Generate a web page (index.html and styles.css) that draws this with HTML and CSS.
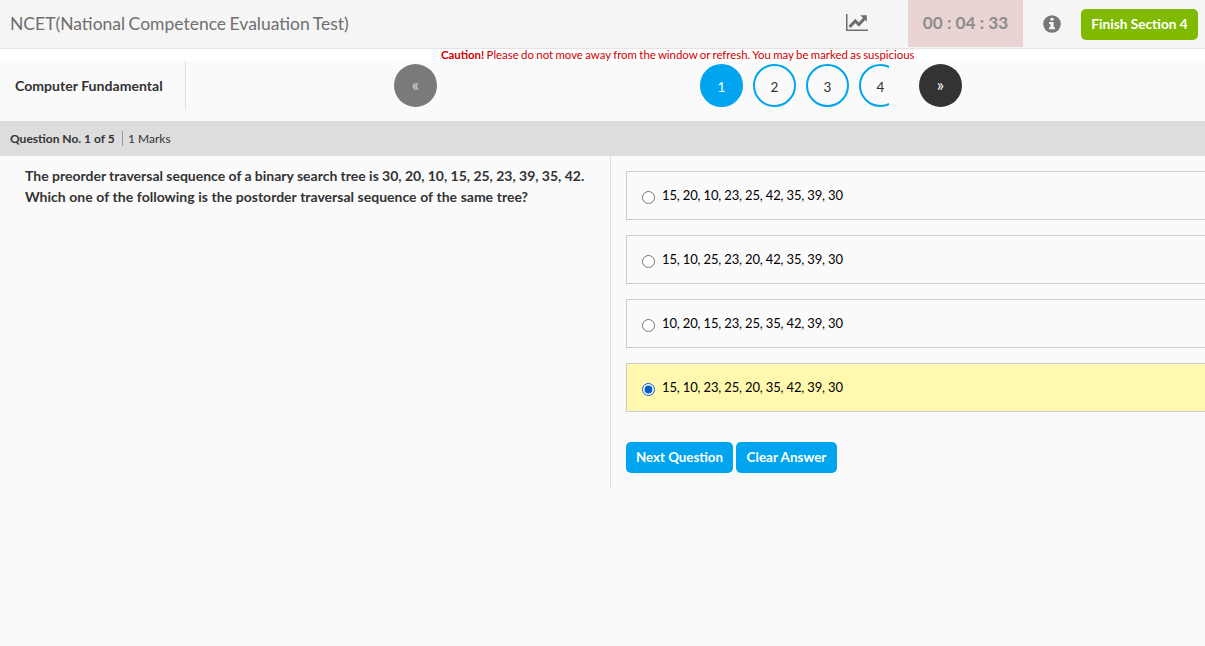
FILE: index.html
```html
<!DOCTYPE html>
<html lang="en">
<head>
<meta charset="utf-8">
<title>NCET(National Competence Evaluation Test)</title>
<link rel="stylesheet" href="styles.css">
</head>
<body>
<header class="topbar">
  <h1 class="title">NCET(National Competence Evaluation Test)</h1>
  <svg class="chart-icon" viewBox="0 0 22 17"><path d="M.75 0v16.25H22" fill="none" stroke="#6f6f6f" stroke-width="1.5"/><path d="M3.5 13l5.8-6 3.5 3.5 5.7-6" fill="none" stroke="#6f6f6f" stroke-width="3"/><path d="M14.2 1.2h6.6v6.6z" fill="#6f6f6f"/></svg>
  <div class="timer">00 : 04 : 33</div>
  <svg class="info-icon" viewBox="0 0 18 18"><circle cx="9" cy="9" r="8.8" fill="#777"/><path d="M7.4 3h3.2v2.6H7.4zM6 7h4.6v5.3H12v1.9H6v-1.9h1.4V8.9H6z" fill="#f5f5f5"/></svg>
  <button class="btn finish">Finish Section 4</button>
</header>
<p class="caution"><b>Caution!</b> Please do not move away from the window or refresh. You may be marked as suspicious</p>
<nav class="sections">
  <div class="section-name">Computer Fundamental</div>
  <button class="round prev">«</button>
  <div class="pages">
    <button class="round page current">1</button>
    <button class="round page">2</button>
    <button class="round page">3</button>
    <button class="round page">4</button>
  </div>
  <button class="round next">»</button>
</nav>
<div class="meta"><b>Question No. 1 of 5</b><span class="marks">1 Marks</span></div>
<main class="content">
  <section class="question"><span class="line-a">The preorder traversal sequence of a binary search tree is 30, 20, 10, 15, 25, 23, 39, 35, 42.</span><br><span class="line-b">Which one of the following is the postorder traversal sequence of the same tree?</span></section>
  <section class="answers">
    <label class="option"><input type="radio" name="answer"><span>15, 20, 10, 23, 25, 42, 35, 39, 30</span></label>
    <label class="option"><input type="radio" name="answer"><span>15, 10, 25, 23, 20, 42, 35, 39, 30</span></label>
    <label class="option"><input type="radio" name="answer"><span>10, 20, 15, 23, 25, 35, 42, 39, 30</span></label>
    <label class="option selected"><input type="radio" name="answer" checked><span>15, 10, 23, 25, 20, 35, 42, 39, 30</span></label>
    <div class="actions"><button class="btn blue">Next Question</button><button class="btn blue clear">Clear Answer</button></div>
  </section>
</main>
</body>
</html>
```
FILE: styles.css
```css
* { box-sizing: border-box; }
body { margin: 0; height: 646px; overflow: hidden; background: #fafafa; color: #333; font: 14px/21px Lato, "Liberation Sans", sans-serif; }
button { font: inherit; border: 0; padding: 0; }
.topbar { display: flex; height: 49px; background: #f5f5f5; border-bottom: 1px solid #e3e3e3; }
.title { margin: 0; padding-left: 10px; width: 846px; font-size: 17.5px; word-spacing: -1px; font-weight: 400; line-height: 47px; color: #6f6f6f; white-space: nowrap; }
.chart-icon { width: 22px; height: 17px; margin-top: 14px; flex: none; }
.timer { width: 115px; height: 47px; margin-left: 40px; background: #e9d3d3; color: #8d8d8d; font-size: 17.2px; font-weight: 700; line-height: 46px; text-align: center; flex: none; }
.info-icon { width: 18px; height: 18px; margin: 15px 20px 0; flex: none; }
.btn { height: 31px; padding-bottom: 1px; border-radius: 5px; color: #fff; font-size: 13.3px; font-weight: 700; white-space: nowrap; }
.finish { width: 117px; margin-top: 9px; background: #80ba00; font-size: 13.7px; padding-bottom: 2px; flex: none; }
.caution { margin: 0; padding-left: 441px; height: 12px; background: #fff; color: #d00000; font-size: 11.4px; word-spacing: -.55px; line-height: 12px; white-space: nowrap; }
.sections { display: flex; height: 60px; align-items: flex-start; }
.section-name { width: 186px; height: 48px; padding-left: 15px; line-height: 50px; border-right: 1px solid #ddd; font-size: 14.1px; font-weight: 700; white-space: nowrap; }
.round { width: 43px; height: 43px; border-radius: 50%; flex: none; color: #fff; text-align: center; }
.prev { margin: 3px 0 0 208px; background: #7a7a7a; color: #ddd; font-size: 17px; padding-bottom: 3px; }
.pages { display: flex; gap: 10px; width: 189px; height: 46px; margin-left: 263px; padding-top: 3px; overflow: hidden; }
.page { border: 2px solid #00a4ef; background: #fafafa; color: #333; font-size: 13.5px; padding-top: 4px; }
.current { background: #00a4ef; color: #fff; }
.next { margin: 3px 0 0 30px; background: #333; font-size: 17px; padding-bottom: 3px; }
.meta { display: flex; height: 35px; align-items: center; padding-left: 10px; background: #ddd; font-size: 12px; line-height: 15px; white-space: nowrap; }
.meta b { width: 112px; }
.marks { border-left: 1px solid #999; padding-left: 5px; }
.content { display: flex; height: 332px; }
.question { width: 611px; padding: 9px 0 0 25px; border-right: 1px solid #ddd; font-weight: 700; white-space: nowrap; flex: none; }
.line-a { word-spacing: -.1px; }
.line-b { word-spacing: .22px; }
.answers { flex: 1; padding: 15px 0 0 15px; }
.option { display: flex; height: 49px; margin-bottom: 15px; padding-left: 15px; border: 1px solid #ccc; border-right: 0; color: #000; font-size: 13px; letter-spacing: -.15px; line-height: 47px; white-space: nowrap; }
.option input { width: 13px; height: 13px; margin: 19px 7px 0 0; accent-color: #005cc8; }
.selected { background: #fff8ae; }
.actions { display: flex; gap: 3px; margin-top: 30px; }
.blue { width: 107px; background: #00a4ef; }
.clear { width: 101px; font-size: 13.5px; }
```
